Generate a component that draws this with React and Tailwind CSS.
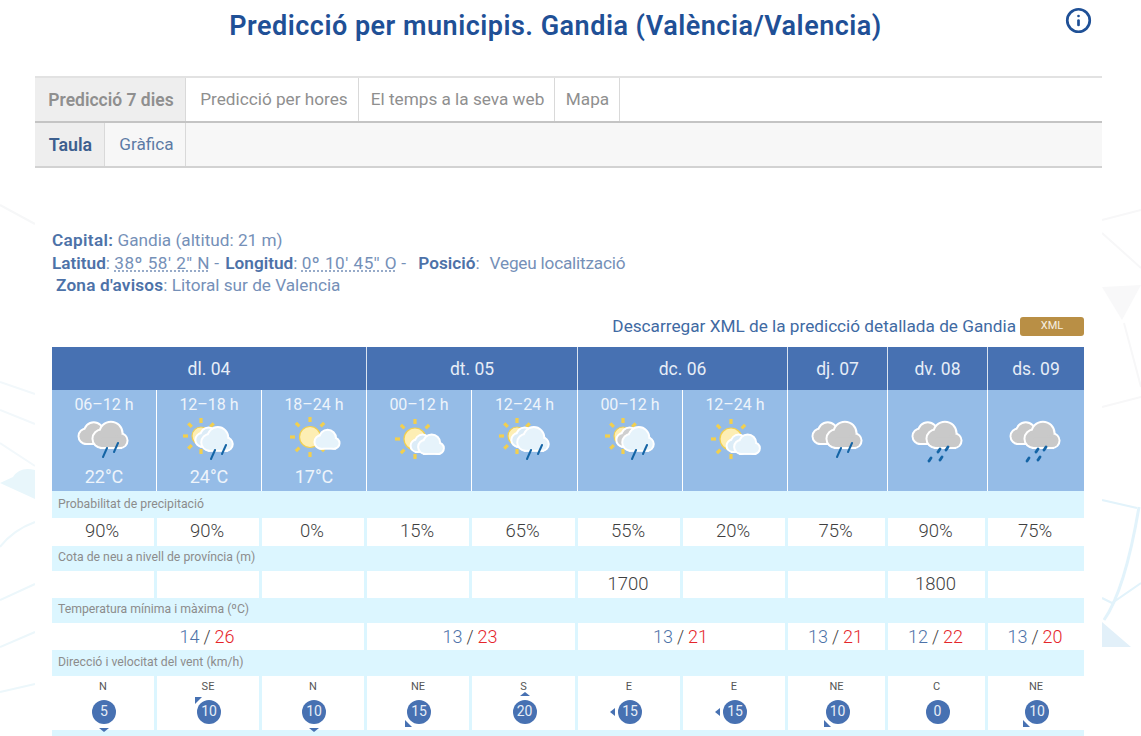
import { Info } from "lucide-react"

const SUN = "#f2cf4e"

function Sun({ x, y, r = 10, reach = 20 }) {
  const rays = [0, 45, 90, 135, 180, 225, 270, 315]
  return (
    <g>
      {rays.map((a) => (
        <rect
          key={a}
          x={x - 1.6}
          y={y - reach}
          width="3.2"
          height="5"
          fill={SUN}
          transform={`rotate(${a} ${x} ${y})`}
        />
      ))}
      <circle cx={x} cy={y} r={r} fill="#fdeeb4" stroke={SUN} strokeWidth="1.2" />
    </g>
  )
}

// three lobes on a flat base, white outline drawn underneath
function Cloud({ x, y, s = 1, fill = "#c9c9c9" }) {
  const lobes = (
    <>
      <circle cx="-9" cy="3" r="9" />
      <circle cx="1" cy="-3" r="11.5" />
      <circle cx="11" cy="5" r="7" />
      <rect x="-9" y="2" width="20" height="10" />
    </>
  )
  return (
    <g transform={`translate(${x} ${y}) scale(${s})`}>
      <g fill="#fff" stroke="#fff" strokeWidth={4 / s}>
        {lobes}
      </g>
      <g fill={fill}>{lobes}</g>
    </g>
  )
}

function Rain({ x = 0, y = 0 }) {
  return (
    <g stroke="#1464a5" strokeWidth="2" strokeLinecap="round" transform={`translate(${x} ${y})`}>
      <path d="M-1 41 L3 32" />
      <path d="M10 36 L14 27" />
    </g>
  )
}

function Drops() {
  return (
    <g stroke="#1464a5" strokeWidth="2.8" strokeLinecap="round">
      <path d="M0 36 L2 33" />
      <path d="M8 34 L10 31" />
      <path d="M-9 45 L-7 42" />
      <path d="M2 44 L4 41" />
    </g>
  )
}

function WeatherIcon({ type }) {
  return (
    <svg width="60" height="50" viewBox="-30 0 60 50" className="mx-auto block">
      {type === "rain-gray" && (
        <>
          <Cloud x={-11} y={18} s={0.75} />
          <Cloud x={6} y={20} s={0.92} />
          <Rain />
        </>
      )}
      {type === "showers" && (
        <>
          <Cloud x={-11} y={18} s={0.75} />
          <Cloud x={6} y={20} s={0.92} />
          <Drops />
        </>
      )}
      {type === "sun-rain" && (
        <>
          <Sun x={-8} y={20} r={9} reach={18} />
          <Cloud x={-1} y={22} s={0.65} fill="#dcecf7" />
          <Cloud x={8} y={24} s={0.82} fill="#e6f3fb" />
          <Rain x={3} y={2} />
        </>
      )}
      {type === "sun-gray-rain" && (
        <>
          <Sun x={-7} y={20} r={9} reach={18} />
          <Cloud x={-1} y={22} s={0.65} fill="#cfcfcf" />
          <Cloud x={8} y={24} s={0.82} fill="#e6f3fb" />
          <Rain x={3} y={2} />
        </>
      )}
      {type === "sun-cloud" && (
        <>
          <Sun x={-4} y={21} r={10.5} />
          <Cloud x={13} y={24} s={0.64} fill="#e6f3fb" />
        </>
      )}
      {type === "sun-clouds" && (
        <>
          <Sun x={-4} y={23} r={11} />
          <Cloud x={3} y={28} s={0.58} fill="#dcecf7" />
          <Cloud x={12} y={29} s={0.66} fill="#e6f3fb" />
        </>
      )}
    </svg>
  )
}

function WindArrow({ dir }) {
  if (dir === "N")
    return <span className="absolute top-[52px] left-1/2 -ml-[4px] h-0 w-0 border-x-[5px] border-t-[4px] border-x-transparent border-t-[#4771b2]" />
  if (dir === "S")
    return <span className="absolute top-[16px] left-1/2 -ml-[4px] h-0 w-0 border-x-[5px] border-b-[4px] border-x-transparent border-b-[#4771b2]" />
  if (dir === "E")
    return <span className="absolute top-[32px] left-1/2 -ml-[19px] h-0 w-0 border-y-[4px] border-r-[5px] border-y-transparent border-r-[#4771b2]" />
  if (dir === "SE")
    return <span className="absolute top-[21px] left-1/2 -ml-[13px] h-0 w-0 border-t-[7px] border-r-[7px] border-t-[#4771b2] border-r-transparent" />
  if (dir === "NE")
    return <span className="absolute top-[44px] left-1/2 -ml-[13px] h-0 w-0 border-b-[7px] border-r-[7px] border-b-[#4771b2] border-r-transparent" />
  return null
}

const days = [
  { label: "dl. 04", span: "col-span-3" },
  { label: "dt. 05", span: "col-span-2" },
  { label: "dc. 06", span: "col-span-2" },
  { label: "dj. 07", span: "col-span-1" },
  { label: "dv. 08", span: "col-span-1" },
  { label: "ds. 09", span: "col-span-1" },
]

const periods = [
  { time: "06–12 h", icon: "rain-gray", temp: "22°C", rain: "90%" },
  { time: "12–18 h", icon: "sun-rain", temp: "24°C", rain: "90%" },
  { time: "18–24 h", icon: "sun-cloud", temp: "17°C", rain: "0%" },
  { time: "00–12 h", icon: "sun-clouds", rain: "15%" },
  { time: "12–24 h", icon: "sun-rain", rain: "65%" },
  { time: "00–12 h", icon: "sun-gray-rain", rain: "55%", snow: "1700" },
  { time: "12–24 h", icon: "sun-clouds", rain: "20%" },
  { icon: "rain-gray", rain: "75%" },
  { icon: "showers", rain: "90%", snow: "1800" },
  { icon: "showers", rain: "75%" },
]

const temps = [
  { min: 14, max: 26, span: "col-span-3" },
  { min: 13, max: 23, span: "col-span-2" },
  { min: 13, max: 21, span: "col-span-2" },
  { min: 13, max: 21, span: "col-span-1" },
  { min: 12, max: 22, span: "col-span-1" },
  { min: 13, max: 20, span: "col-span-1" },
]

const wind = [
  { dir: "N", speed: 5 },
  { dir: "SE", speed: 10 },
  { dir: "N", speed: 10 },
  { dir: "NE", speed: 15 },
  { dir: "S", speed: 20 },
  { dir: "E", speed: 15 },
  { dir: "E", speed: 15 },
  { dir: "NE", speed: 10 },
  { dir: "C", speed: 0 },
  { dir: "NE", speed: 10 },
]

const gridCols = "grid grid-cols-[105px_105px_105px_105px_106px_105px_105px_100px_100px_96px]"

function RowLabel({ children }) {
  return (
    <div className="flex h-[27.5px] items-center bg-[#dcf6ff] pl-[6px] text-[12.25px] text-[#8c8c8c]">{children}</div>
  )
}

// faint watermark showing in the strips either side of the page
function Background() {
  return (
    <svg className="absolute inset-0 h-full w-full" viewBox="0 0 1141 736" fill="none">
      <g stroke="#f2f8fb" strokeWidth="2">
        <path d="M0 205 L35 224" stroke="#f6f7f8" />
        <path d="M0 382 L35 394" />
        <path d="M0 410 L35 424" />
        <path d="M0 443 L35 466" />
        <path d="M0 547 Q13 530 35 522" stroke="#ecf7fb" />
        <path d="M0 600 L35 584" stroke="#ecf7fb" />
        <path d="M0 647 L35 632" stroke="#ecf7fb" />
        <path d="M0 692 L35 684" stroke="#ecf7fb" />
      </g>
      <path d="M0 483 L13 477 Q20 466 35 470 L35 499 Z" fill="#e8f6fb" />
      <g stroke="#f7f7f8" strokeWidth="2">
        <path d="M1102 220 L1141 210" />
        <path d="M1102 233 L1141 268" />
        <path d="M1124 323 L1141 387" />
        <path d="M1102 407 L1141 397" />
      </g>
      <path d="M1102 287 L1141 285 L1122 320 Z" fill="#f8f8f9" />
      <g stroke="#e2f3fb" strokeWidth="2">
        <path d="M1102 500 L1137 508" />
        <path d="M1139 507 Q1125 590 1104 620" strokeWidth="3" />
        <path d="M1102 598 L1112 603 L1141 583" />
      </g>
      <path d="M1102 622 L1131 647 L1102 647 Z" fill="#e2f0f9" />
    </svg>
  )
}

export default function App() {
  return (
    <div className="relative h-[736px] w-[1141px] overflow-hidden bg-white font-['Roboto',sans-serif] text-[#3f3f3f]">
      <Background />
      <div className="relative ml-[35px] h-full w-[1067px] overflow-hidden bg-white">
        <div className="relative flex h-[76px] justify-center pt-[7px] pr-[26px]">
          <h1 className="text-[27px] leading-[38px] font-semibold tracking-[0.5px] text-[#1f5096]">
            Predicció per municipis. Gandia (València/Valencia)
          </h1>
          <Info className="absolute top-[7px] right-[10px] h-[27px] w-[27px] text-[#1f5096]" strokeWidth={2.4} />
        </div>

        <div className="flex h-[47px] border-y-2 border-t-[#e2e2e2] border-b-[#c4c4c4] bg-white pt-px text-[17.2px] text-[#8f8f8f]">
          <div className="-mt-px flex w-[151px] items-center justify-center border-r border-[#d9d9d9] bg-[#eeeeee] pt-px pl-[2px] text-[17.5px] font-semibold">
            Predicció 7 dies
          </div>
          <div className="-mt-px flex w-[173px] items-center justify-center border-r border-[#d9d9d9] pt-px pl-[4px]">Predicció per hores</div>
          <div className="-mt-px flex w-[196px] items-center justify-center border-r border-[#d9d9d9] pt-px pl-[2px]">El temps a la seva web</div>
          <div className="-mt-px flex w-[65px] items-center justify-center border-r border-[#d9d9d9] pt-px pl-px">Mapa</div>
        </div>
        <div className="flex h-[45px] border-b-2 border-[#d2d2d2] bg-[#f7f7f7] text-[17.2px] text-[#5d7ba5]">
          <div className="flex w-[70px] items-center justify-center border-r border-[#d9d9d9] bg-[#eeeeee] pt-px pl-[2px] text-[17.8px] font-semibold text-[#3d5f8f]">
            Taula
          </div>
          <div className="flex w-[81px] items-center justify-center border-r border-[#d9d9d9] pt-px pl-[3px]">Gràfica</div>
        </div>

        <div className="mx-[17px] mt-[61px] text-[17.2px] leading-[22.5px] text-[#7590b8]">
          <p>
            <b className="font-semibold tracking-[0.3px] text-[#4d72a8]">Capital:</b> Gandia (altitud: 21 m)
          </p>
          <p>
            <b className="font-semibold text-[#4d72a8]">Latitud</b>:{" "}
            <span className="underline decoration-dotted underline-offset-2 tracking-[0.5px]">38º 58' 2'' N</span> -{" "}
            <b className="ml-[2px] font-semibold text-[#4d72a8]">Longitud</b>:{" "}
            <span className="underline decoration-dotted underline-offset-2 tracking-[0.5px]">0º 10' 45'' O</span> -{" "}
            <b className="ml-[8px] font-semibold text-[#4d72a8]">Posició</b>:
            <span className="ml-[10px] tracking-[-0.2px]">Vegeu localització</span>
          </p>
          <p className="pl-[4px]">
            <b className="font-semibold tracking-[0.2px] text-[#4d72a8]">Zona d'avisos</b>: Litoral sur de Valencia
          </p>
        </div>

        <div className="mx-[18px] mt-[20px] flex h-[20px] items-center justify-end gap-[4px] text-[17.2px] text-[#3f6aa3]">
          <span>Descarregar XML de la predicció detallada de Gandia</span>
          <span className="flex h-[19px] w-[64px] items-center justify-center rounded-[3px] bg-[#b98f45] text-[11px] text-[#f7efe0]">
            XML
          </span>
        </div>

        <div className="mt-[10px] ml-[17px] w-[1032px]">
          <div className={`${gridCols} h-[43px] bg-[#4771b2] text-[17.5px] text-[#e6edf7]`}>
            {days.map((d) => (
              <div key={d.label} className={`${d.span} flex items-center justify-center border-r border-white/80 pt-[3px] last:border-r-0`}>
                {d.label}
              </div>
            ))}
          </div>

          <div className={`${gridCols} h-[101px] bg-[#95bce7] text-[#eef4fb]`}>
            {periods.map((p, i) => (
              <div key={i} className="border-r border-white last:border-r-0">
                <div className="h-[26px] pt-[5px] text-center text-[16px] leading-[20px]">{p.time}</div>
                <WeatherIcon type={p.icon} />
                <div className="text-center text-[18px] leading-[22px]">{p.temp}</div>
              </div>
            ))}
          </div>

          <RowLabel>Probabilitat de precipitació</RowLabel>
          <div className={`${gridCols} h-[25px] bg-[#dcf6ff]`}>
            {periods.map((p, i) => (
              <div key={i} className="flex items-center justify-center border-r-[3px] border-[#dcf6ff] bg-white pr-[2px] text-[18.5px] font-light last:border-r-0">
                {p.rain}
              </div>
            ))}
          </div>

          <RowLabel>Cota de neu a nivell de província (m)</RowLabel>
          <div className={`${gridCols} h-[25px] bg-[#dcf6ff]`}>
            {periods.map((p, i) => (
              <div key={i} className="flex items-center justify-center border-r-[3px] border-[#dcf6ff] bg-white pr-[2px] text-[18.5px] font-light last:border-r-0">
                {p.snow}
              </div>
            ))}
          </div>

          <RowLabel>Temperatura mínima i màxima (ºC)</RowLabel>
          <div className={`${gridCols} h-[25px] bg-[#dcf6ff]`}>
            {temps.map((t, i) => (
              <div key={i} className={`${t.span} flex items-center justify-center gap-[4px] border-r-[3px] border-[#dcf6ff] bg-white pr-[2px] text-[18px] font-light last:border-r-0`}>
                <span className="text-[#4d72a8]">{t.min}</span>
                <span>/</span>
                <span className="text-[#e5252a]">{t.max}</span>
              </div>
            ))}
          </div>

          <RowLabel>Direcció i velocitat del vent (km/h)</RowLabel>
          <div className={`${gridCols} h-[54px] bg-[#dcf6ff]`}>
            {wind.map((w, i) => (
              <div key={i} className="relative border-r-[3px] border-[#dcf6ff] bg-white last:border-r-0">
                <div className="pt-[4px] text-center text-[11px] leading-[13px] text-[#555]">{w.dir}</div>
                <WindArrow dir={w.dir} />
                <div className="absolute top-[24px] left-1/2 -ml-[11px] flex h-[24px] w-[24px] items-center justify-center rounded-full bg-[#4771b2] text-[14px] text-[#e6edf7]">
                  {w.speed}
                </div>
              </div>
            ))}
          </div>
          <div className="h-[10px] bg-[#dcf6ff]" />
        </div>
      </div>
    </div>
  )
}
